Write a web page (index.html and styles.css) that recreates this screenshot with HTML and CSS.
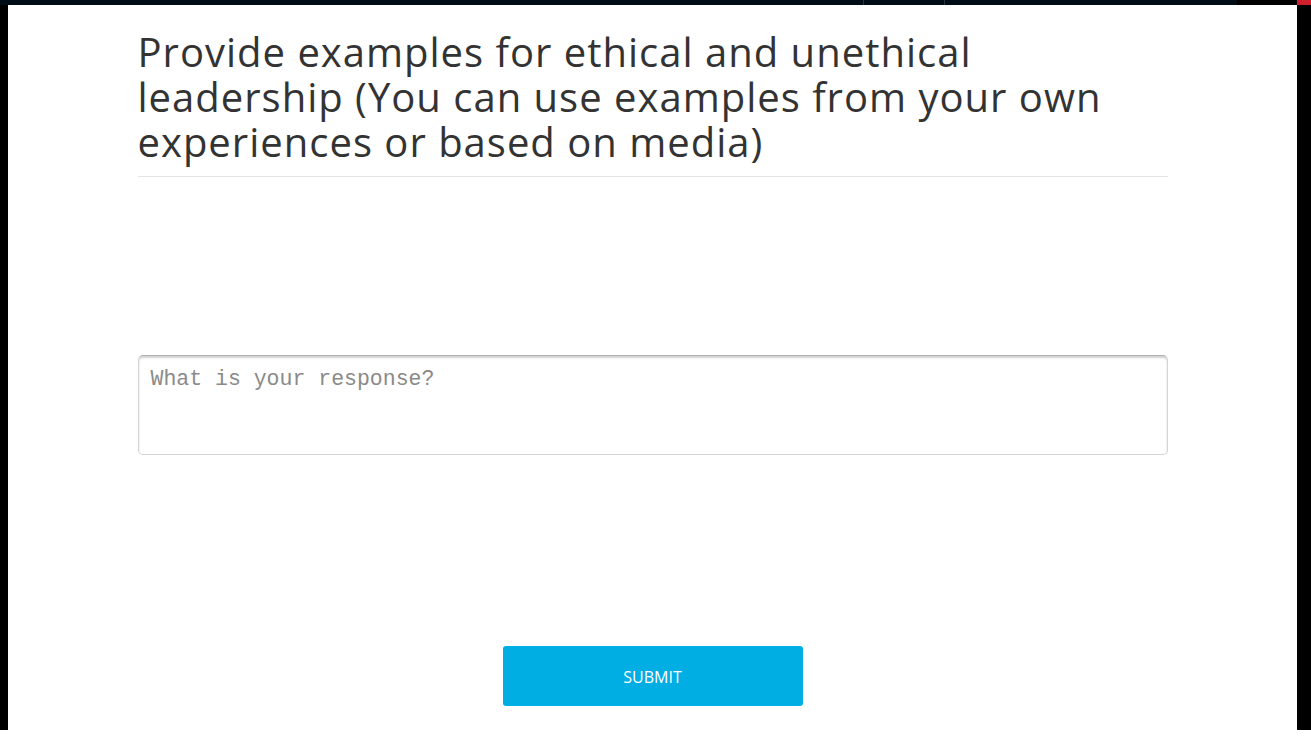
FILE: index.html
```html
<!DOCTYPE html>
<html lang="en">
<head>
<meta charset="utf-8">
<title>Response</title>
<link rel="stylesheet" href="styles.css">
</head>
<body>
<div class="topbar">
  <div class="topbar-main">
    <span class="tb-seg tb-seg-a"></span>
    <span class="tb-seg tb-seg-b"></span>
    <span class="tb-seg tb-seg-c"></span>
  </div>
  <div class="topbar-dark"></div>
  <div class="topbar-red"></div>
</div>
<div class="frame">
  <div class="strip strip-left"></div>
  <main class="stage">
    <div class="content">
      <h1 class="question">Provide examples for ethical and unethical leadership (You can use examples from your own experiences or based on media)</h1>
      <div class="answer-area">
        <textarea class="response" placeholder="What is your response?"></textarea>
      </div>
      <div class="actions">
        <button class="submit" type="button">SUBMIT</button>
      </div>
    </div>
  </main>
  <div class="strip strip-right"></div>
</div>
</body>
</html>
```
FILE: styles.css
```css
html, body {
  margin: 0;
  padding: 0;
  background: #ffffff;
}
body {
  width: 1311px;
  height: 737px;
  overflow: hidden;
  font-family: "Open Sans", "Liberation Sans", sans-serif;
}
.topbar {
  display: flex;
  height: 5px;
}
.topbar-main {
  display: flex;
  width: 1237px;
  background: #010d16;
}
.tb-seg {
  display: block;
  height: 5px;
  border-right: 1px solid #2a3540;
}
.tb-seg-a { width: 863px; }
.tb-seg-b { width: 80px; }
.tb-seg-c { flex: 1; border-right: none; }
.topbar-dark {
  width: 60px;
  background: #000000;
}
.topbar-red {
  width: 14px;
  background: #d0202e;
}
.frame {
  display: flex;
  height: 725px;
}
.strip {
  background: #000000;
}
.strip-left { width: 8px; }
.strip-right { width: 14px; }
.stage {
  flex: 1;
  background: #ffffff;
  display: flex;
  justify-content: center;
}
.content {
  width: 1030px;
  display: flex;
  flex-direction: column;
}
.question {
  margin: 24px 0 0;
  padding-bottom: 12px;
  border-bottom: 1px solid #e5e5e5;
  font-family: "Open Sans", "Liberation Sans", sans-serif;
  font-weight: 400;
  font-size: 40px;
  line-height: 45px;
  letter-spacing: 1px;
  color: #333333;
}
.answer-area {
  padding-top: 178px;
}
.response {
  display: block;
  box-sizing: border-box;
  width: 1030px;
  height: 100px;
  margin: 0;
  padding: 10px 12px;
  border: 1px solid #d4d4d4;
  border-top-color: #b3b3b3;
  border-radius: 5px;
  box-shadow: inset 0 2px 2px rgba(0, 0, 0, 0.18);
  font-family: "Liberation Mono", "Courier New", monospace;
  font-size: 21.5px;
  line-height: 26px;
  color: #333333;
  resize: none;
  outline: none;
}
.response::placeholder {
  color: #8a8a8a;
}
.actions {
  display: flex;
  justify-content: center;
  padding-top: 191px;
}
.submit {
  width: 300px;
  height: 60px;
  border: none;
  border-radius: 3px;
  background: #00aee3;
  color: #ffffff;
  font-family: "Open Sans", "Liberation Sans", sans-serif;
  font-weight: 400;
  font-size: 16px;
  padding-top: 2px;
  cursor: pointer;
}
```
